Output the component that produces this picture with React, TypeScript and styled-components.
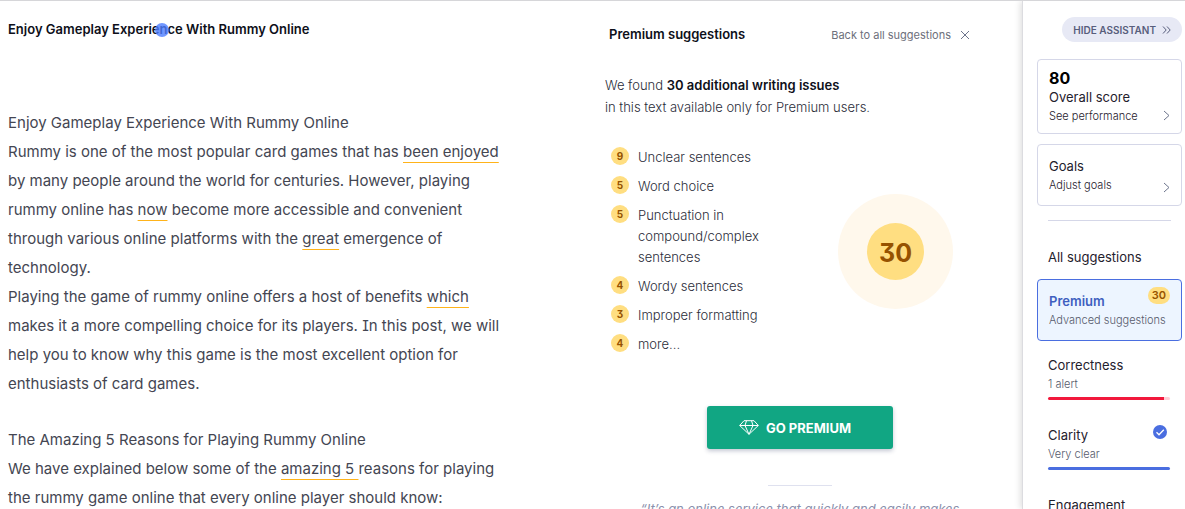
import React from "react";
import styled, { createGlobalStyle } from "styled-components";

const GlobalStyle = createGlobalStyle`
  *, *::before, *::after { box-sizing: border-box; }
  body {
    margin: 0;
    background: #fff;
    color: #0e101a;
    font-family: Inter, "Liberation Sans", sans-serif;
    font-size: 13px;
  }
  h1, h2, p, ul, blockquote { margin: 0; padding: 0; }
  button { font: inherit; color: inherit; cursor: pointer; }
`;

const Page = styled.div`
  display: grid;
  grid-template-columns: minmax(0, 1fr) 417px 163px;
  height: 100vh;
  overflow: hidden;
  border-top: 1px solid #d6d6d9;
`;

const Editor = styled.main`
  padding: 18px 8px 0;
  overflow: hidden;
`;

const DocTitle = styled.h1`
  position: relative;
  width: fit-content;
  margin-bottom: 69px;
  font-size: 13px;
  font-weight: 600;
  line-height: 20px;
`;

const Hotspot = styled.span`
  position: absolute;
  left: 147px;
  top: 4px;
  width: 14px;
  height: 14px;
  border-radius: 50%;
  background: rgba(77, 125, 255, 0.8);
`;

const DocBody = styled.article`
  max-width: 504px;
  color: #444652;
  font-size: 15px;
  font-weight: 400;
  line-height: 29px;
  font-feature-settings: "cv08";
`;

const Section = styled.section`
  & + & { margin-top: 27px; }
`;

const Alert = styled.span`
  text-decoration: underline 1px #ffb31a;
  text-decoration-skip-ink: none;
  text-underline-offset: 5px;
`;

const Panel = styled.section`
  display: flex;
  flex-direction: column;
  overflow: hidden;
`;

const PanelHeader = styled.header`
  display: flex;
  align-items: flex-start;
  justify-content: space-between;
  padding: 23px 52px 0 4px;
  line-height: 20px;
`;

const PanelTitle = styled.h2`
  font-size: 13px;
  font-weight: 600;
`;

const BackButton = styled.button`
  display: flex;
  align-items: center;
  gap: 9px;
  padding: 1px 0 0;
  border: 0;
  background: none;
  color: #6d6f7b;
  font-size: 11px;
  font-weight: 400;
  line-height: 20px;
`;

const Intro = styled.p`
  margin-top: 29px;
  color: #2b2d3a;
  font-weight: 300;
  line-height: 22px;
  strong { color: #0e101a; font-weight: 600; }
`;

const Summary = styled.div`
  display: flex;
  align-items: center;
  justify-content: space-between;
  padding: 29px 69px 0 6px;
`;

const IssueList = styled.ul`
  display: flex;
  flex-direction: column;
  gap: 8px;
  width: 160px;
  list-style: none;
`;

const Issue = styled.li`
  display: flex;
  align-items: flex-start;
  gap: 9px;
  color: #2b2d3a;
  font-weight: 300;
  line-height: 21px;
`;

const Count = styled.span`
  flex: none;
  width: 18px;
  height: 18px;
  border-radius: 50%;
  background: #ffde81;
  color: #965200;
  font-size: 10px;
  font-weight: 700;
  line-height: 18px;
  text-align: center;
  font-feature-settings: "cv09";
`;

const Halo = styled.div`
  display: grid;
  place-items: center;
  width: 115px;
  height: 115px;
  border-radius: 50%;
  background: #fff8ec;
`;

const Total = styled.div`
  width: 57px;
  height: 57px;
  border-radius: 50%;
  background: #ffde81;
  color: #965200;
  font-size: 25px;
  font-weight: 700;
  line-height: 60px;
  text-align: center;
  font-feature-settings: "cv09";
`;

const PremiumButton = styled.button`
  display: flex;
  flex: none;
  align-items: center;
  justify-content: center;
  align-self: center;
  gap: 7px;
  width: 186px;
  height: 43px;
  margin: 51px 27px 0 0;
  padding: 0 10px 0 0;
  border: 0;
  border-radius: 3px;
  background: #11a683;
  box-shadow: 0 2px 4px rgba(60, 70, 110, 0.3);
  color: #fff;
  font-size: 13px;
  font-weight: 700;
`;

const Rule = styled.hr`
  flex: none;
  align-self: center;
  width: 64px;
  height: 1px;
  margin: 36px 27px 0 0;
  border: 0;
  background: #dfe1ef;
`;

const Quote = styled.blockquote`
  flex: none;
  align-self: center;
  width: 350px;
  margin: 13px 27px 0 0;
  color: #8b91ad;
  font-style: italic;
  line-height: 21px;
  text-align: center;
`;

const Sidebar = styled.aside`
  display: flex;
  flex-direction: column;
  padding: 16px 3px 0 14px;
  border-left: 1px solid #dcdce0;
  box-shadow: -2px 0 6px rgba(0, 0, 0, 0.12);
  overflow: hidden;
`;

const HideButton = styled.button`
  display: flex;
  flex: none;
  align-items: center;
  align-self: flex-end;
  gap: 6px;
  height: 25px;
  padding: 0 11px;
  border: 0;
  border-radius: 13px;
  background: #e7e9f5;
  color: #585e7c;
  font-size: 10px;
  font-weight: 600;
  white-space: nowrap;
`;

const Card = styled.button<{ $active?: boolean }>`
  display: flex;
  flex-direction: column;
  justify-content: center;
  position: relative;
  flex: none;
  padding: 10px 11px;
  border: 1px solid ${(p) => (p.$active ? "#4a6ee0" : "#d5d7e8")};
  border-radius: 4px;
  background: ${(p) => (p.$active ? "#edf5ff" : "#fff")};
  text-align: left;
`;

const ScoreCard = styled(Card)`
  height: 75px;
  margin-top: 17px;
`;

const GoalsCard = styled(Card)`
  height: 62px;
  margin-top: 10px;
`;

const PremiumCard = styled(Card)`
  height: 62px;
  margin-top: 11px;
`;

const Score = styled.span`
  color: #000;
  font-size: 16px;
  font-weight: 700;
  line-height: 19px;
`;

const Label = styled.span<{ $active?: boolean }>`
  color: ${(p) => (p.$active ? "#3f5fc0" : "#1f212d")};
  font-size: 13px;
  font-weight: ${(p) => (p.$active ? 600 : 400)};
  line-height: 19px;
`;

const Hint = styled.span<{ $soft?: boolean }>`
  color: ${(p) => (p.$soft ? "#565a6b" : "#1f212d")};
  font-size: 11px;
  font-weight: 300;
  line-height: 18px;
  white-space: nowrap;
`;

const CardArrow = styled.svg`
  position: absolute;
  right: 11px;
  bottom: 12px;
`;

const CountPill = styled.span`
  position: absolute;
  right: 11px;
  top: 7px;
  padding: 0 4px;
  border-radius: 9px;
  background: #ffde81;
  color: #965200;
  font-size: 11px;
  font-weight: 600;
  line-height: 17px;
`;

const SideRule = styled.hr`
  flex: none;
  height: 1px;
  margin: 14px 11px 0 11px;
  border: 0;
  background: #d5d7e8;
`;

const Category = styled.button`
  display: flex;
  flex-direction: column;
  position: relative;
  flex: none;
  height: 70px;
  margin: 0 12px 0 11px;
  padding: 15px 0 0;
  border: 0;
  background: none;
  text-align: left;
`;

const AllButton = styled(Category)`
  height: 47px;
  padding-top: 27px;
`;

const Meter = styled.span<{ $fill: string; $track: string; $value: number }>`
  width: 100%;
  height: 3px;
  margin-top: 4px;
  border-radius: 2px;
  background: linear-gradient(
    to right,
    ${(p) => p.$fill} ${(p) => p.$value}%,
    ${(p) => p.$track} ${(p) => p.$value}%
  );
`;

const DoneMark = styled.svg`
  position: absolute;
  right: 3px;
  top: 14px;
`;

const Arrow = () => (
  <CardArrow width="7" height="11" viewBox="0 0 7 11" fill="none" stroke="#6d758d" aria-hidden="true">
    <path d="M1 1l5 4.500-5 4.500" />
  </CardArrow>
);

const issues: [number, string][] = [
  [9, "Unclear sentences"],
  [5, "Word choice"],
  [5, "Punctuation in compound/complex sentences"],
  [4, "Wordy sentences"],
  [3, "Improper formatting"],
  [4, "more..."],
];

export default function App() {
  return (
    <>
      <GlobalStyle />
      <Page>
        <Editor>
          <DocTitle>
            Enjoy Gameplay Experience With Rummy Online
            <Hotspot />
          </DocTitle>
          <DocBody>
            <Section>
              <p>Enjoy Gameplay Experience With Rummy Online</p>
              <p>
                Rummy is one of the most popular card games that has <Alert>been enjoyed</Alert> by
                many people around the world for centuries. However, playing rummy online has{" "}
                <Alert>now</Alert> become more accessible and convenient through various online
                platforms with the <Alert>great</Alert> emergence of technology.
              </p>
              <p>
                Playing the game of rummy online offers a host of benefits <Alert>which</Alert> makes
                it a more compelling choice for its players. In this post, we will help you to know
                why this game is the most excellent option for enthusiasts of card games.
              </p>
            </Section>
            <Section>
              <p>The Amazing 5 Reasons for Playing Rummy Online</p>
              <p>
                We have explained below some of the <Alert>amazing 5 </Alert>reasons for playing the
                rummy game online that every online player should know:
              </p>
            </Section>
          </DocBody>
        </Editor>

        <Panel>
          <PanelHeader>
            <PanelTitle>Premium suggestions</PanelTitle>
            <BackButton>
              Back to all suggestions
              <svg width="10" height="10" viewBox="0 0 10 10" fill="none" stroke="#6d758d" aria-hidden="true">
                <path d="M1 1l8 8M9 1l-8 8" />
              </svg>
            </BackButton>
          </PanelHeader>
          <Intro>
            We found <strong>30 additional writing issues</strong>
            <br />
            in this text available only for Premium users.
          </Intro>
          <Summary>
            <IssueList>
              {issues.map(([count, name]) => (
                <Issue key={name}>
                  <Count>{count}</Count>
                  {name}
                </Issue>
              ))}
            </IssueList>
            <Halo>
              <Total>30</Total>
            </Halo>
          </Summary>
          <PremiumButton>
            <svg width="20" height="15" viewBox="0 0 20 15" fill="none" stroke="#fff" strokeLinejoin="round" aria-hidden="true">
              <path d="M5 .7h10l4.300 4.800L10 14.300.7 5.500zM.7 5.500h18.600M7.500.7L6 5.500l4 8.800 4-8.800L12.500.7" />
            </svg>
            GO PREMIUM
          </PremiumButton>
          <Rule />
          <Quote>“It’s an online service that quickly and easily makes your writing better.”</Quote>
        </Panel>

        <Sidebar>
          <HideButton>
            HIDE ASSISTANT
            <svg width="9" height="8" viewBox="0 0 9 8" fill="none" stroke="#585e7c" aria-hidden="true">
              <path d="M1 .5L4.200 4 1 7.500M5 .5L8.200 4 5 7.500" />
            </svg>
          </HideButton>
          <ScoreCard>
            <Score>80</Score>
            <Label>Overall score</Label>
            <Hint>See performance</Hint>
            <Arrow />
          </ScoreCard>
          <GoalsCard>
            <Label>Goals</Label>
            <Hint>Adjust goals</Hint>
            <Arrow />
          </GoalsCard>
          <SideRule />
          <AllButton>
            <Label>All suggestions</Label>
          </AllButton>
          <PremiumCard $active>
            <Label $active>Premium</Label>
            <Hint $soft>Advanced suggestions</Hint>
            <CountPill>30</CountPill>
          </PremiumCard>
          <Category>
            <Label>Correctness</Label>
            <Hint $soft>1 alert</Hint>
            <Meter $fill="#f2183c" $track="#ffd0d8" $value={95} />
          </Category>
          <Category>
            <Label>Clarity</Label>
            <Hint $soft>Very clear</Hint>
            <Meter $fill="#4a6ee0" $track="#4a6ee0" $value={100} />
            <DoneMark width="14" height="14" viewBox="0 0 14 14" fill="none" aria-hidden="true">
              <circle cx="7" cy="7" r="7" fill="#4a6ee0" />
              <path d="M3.500 7.200l2.500 2.500 4.800-5" stroke="#fff" strokeWidth="1.300" />
            </DoneMark>
          </Category>
          <Category>
            <Label>Engagement</Label>
          </Category>
        </Sidebar>
      </Page>
    </>
  );
}
